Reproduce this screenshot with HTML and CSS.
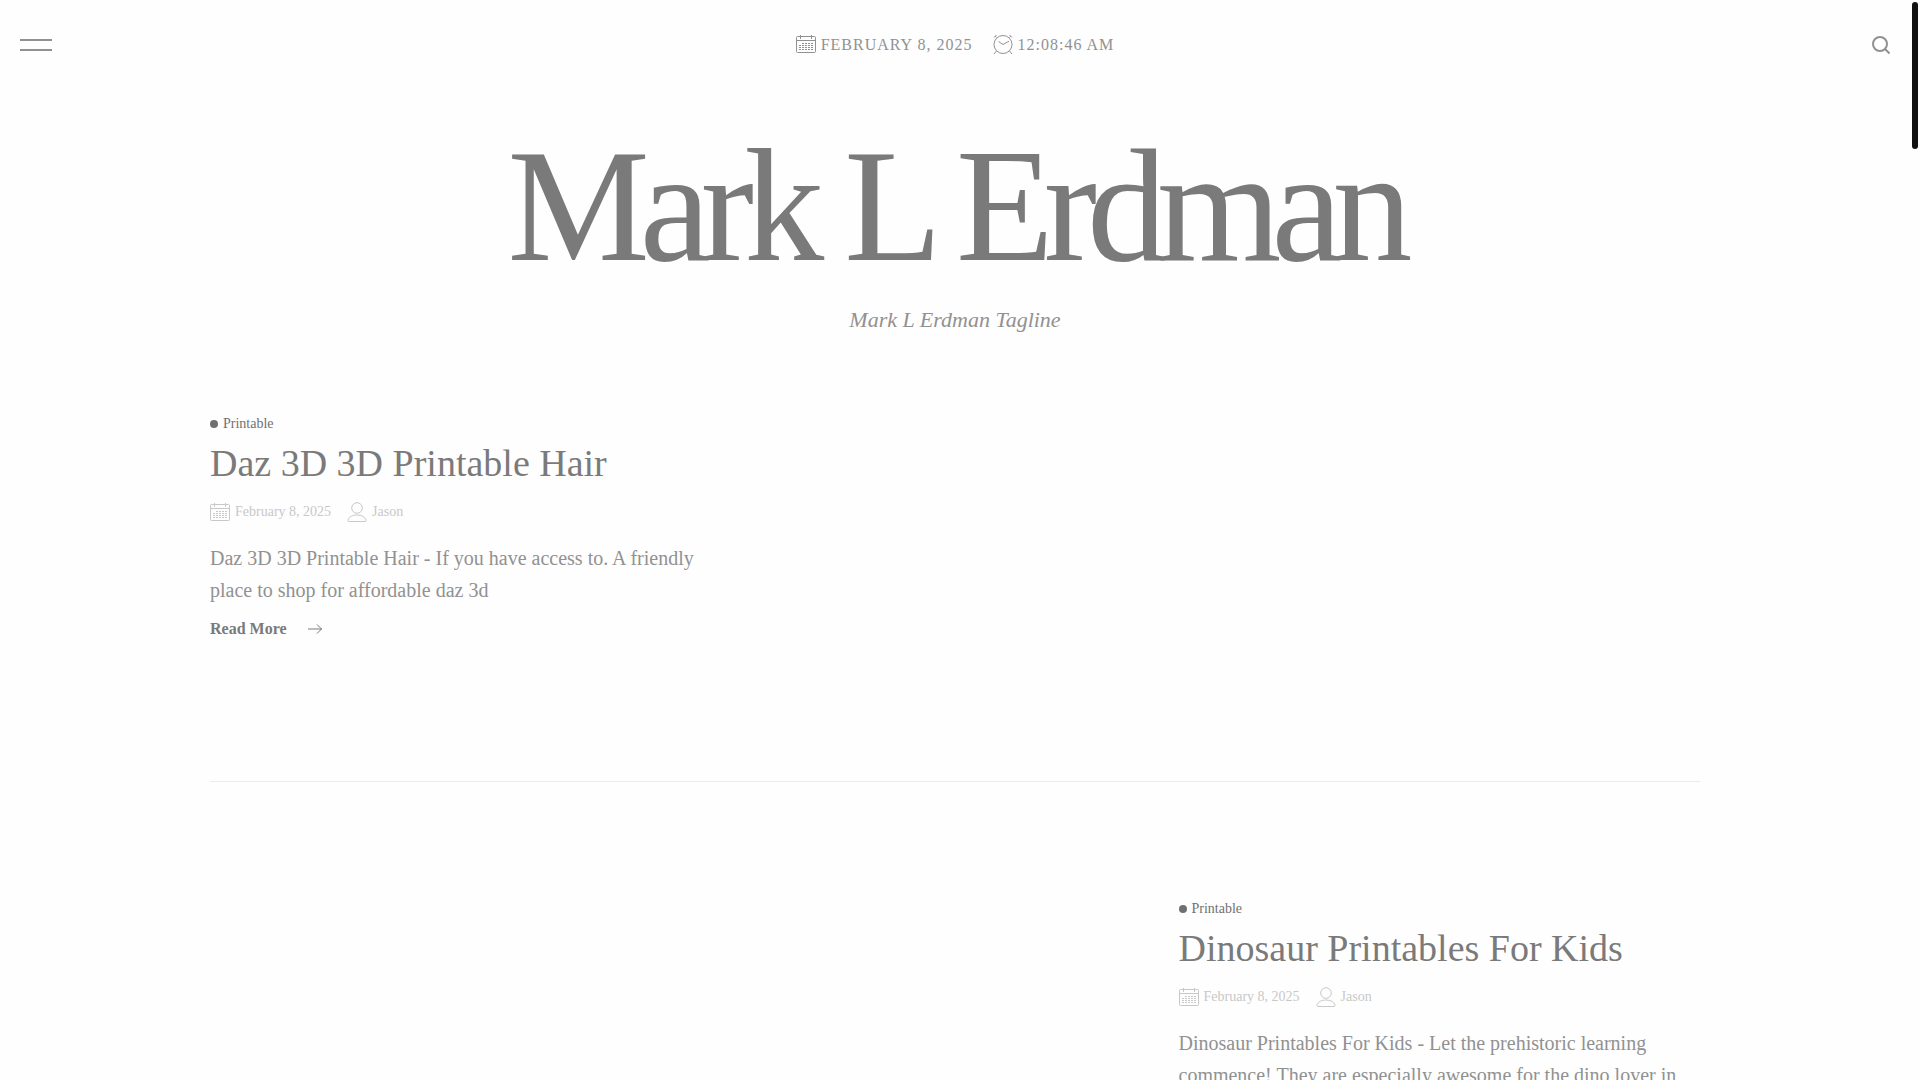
FILE: index.html
```
<!DOCTYPE html>
<html lang="en">
<head>
<meta charset="utf-8">
<title>Mark L Erdman</title>
<link rel="stylesheet" href="styles.css">
</head>

<body>
<!-- Shared icons -->
<svg class="sprite" aria-hidden="true">
    <symbol id="icon-calendar" viewBox="0 0 20 20">
        <rect x=".5" y="2.5" width="19" height="16" rx="1"/>
        <path d="M.5 6.5h19M4.5 1v4M15.5 1v4"/>
        <path stroke-dasharray="2 1" d="M6 9.5h11M3 11.5h14M3 13.5h14M3 15.5h14"/>
    </symbol>
    <symbol id="icon-clock" viewBox="0 0 20 20">
        <circle cx="10" cy="10.5" r="9"/>
        <path d="M5.5 7.5l4.5 3 6-3.3M1 3.5L3.500 1M3.5 3.5L2 2M19 3.5L16.5 1M16.5 3.5L18 2M3.5 17L1 20M16.5 17L19 20"/>
    </symbol>
    <symbol id="icon-user" viewBox="0 0 20 20">
        <circle cx="10" cy="6" r="5.3"/>
        <path d="M2 19.5h16c.9 0 1.3-.6 1-1.5-1-3.3-4.5-5-9-5s-8 1.700-9 5c-.3.9.1 1.5 1 1.5z"/>
    </symbol>
    <symbol id="icon-arrow" viewBox="0 0 16 12">
        <path d="M1 6h14M10 1.5L14.5 6 10 10.5"/>
    </symbol>
</svg>

<header class="topbar">
    <button class="menu-toggle" type="button" aria-label="Menu"><span></span><span></span></button>
    <div class="datetime">
        <span class="meta-item"><svg class="icon"><use href="#icon-calendar"/></svg>February 8, 2025</span>
        <span class="meta-item"><svg class="icon"><use href="#icon-clock"/></svg>12:08:46 AM</span>
    </div>
    <button class="search-toggle" type="button" aria-label="Search">
        <svg viewBox="0 0 20 20"><circle cx="10" cy="9" r="7"/><path d="M15 14l4.5 4.5"/></svg>
    </button>
</header>

<div class="branding">
    <h1 class="site-title"><a href="#">Mark L Erdman</a></h1>
    <p class="tagline">Mark L Erdman Tagline</p>
</div>

<main class="posts">
    <article class="post">
        <div class="post-content">
            <a class="category" href="#">Printable</a>
            <h2 class="post-title"><a href="#">Daz 3D 3D Printable Hair</a></h2>
            <div class="post-meta">
                <a class="meta-item" href="#"><svg class="icon"><use href="#icon-calendar"/></svg>February 8, 2025</a>
                <a class="meta-item" href="#"><svg class="icon"><use href="#icon-user"/></svg>Jason</a>
            </div>
            <p class="excerpt">Daz 3D 3D Printable Hair - If you have access to. A friendly place to shop for affordable daz 3d</p>
            <a class="read-more" href="#">Read More<svg><use href="#icon-arrow"/></svg></a>
        </div>
    </article>
    <article class="post post-right">
        <div class="post-content">
            <a class="category" href="#">Printable</a>
            <h2 class="post-title"><a href="#">Dinosaur Printables For Kids</a></h2>
            <div class="post-meta">
                <a class="meta-item" href="#"><svg class="icon"><use href="#icon-calendar"/></svg>February 8, 2025</a>
                <a class="meta-item" href="#"><svg class="icon"><use href="#icon-user"/></svg>Jason</a>
            </div>
            <p class="excerpt">Dinosaur Printables For Kids - Let the prehistoric learning commence! They are especially awesome for the dino lover in</p>
            <a class="read-more" href="#">Read More<svg><use href="#icon-arrow"/></svg></a>
        </div>
    </article>
</main>

<div class="scroll-thumb"></div>
</body>
</html>
```
FILE: styles.css
```
* {
    box-sizing: border-box;
}
html {
    height: 100%;
    overflow: hidden;
    background: #fefefe;
}
body {
    margin: 0 10px 0 0;
    font-family: "Liberation Serif", "Times New Roman", serif;
    color: #919191;
}
a {
    color: inherit;
    text-decoration: none;
}
button {
    padding: 0;
    border: 0;
    background: none;
    color: inherit;
    cursor: pointer;
}
svg {
    display: block;
    fill: none;
    stroke: currentColor;
}
.sprite {
    display: none;
}
.icon {
    width: 20px;
    height: 20px;
    flex: none;
}
.meta-item {
    display: flex;
    align-items: center;
    gap: 5px;
}

/* Top bar */
.topbar {
    display: grid;
    grid-template-columns: 1fr auto 1fr;
    align-items: center;
    height: 90px;
    padding: 0 20px;
}
.menu-toggle {
    display: flex;
    flex-direction: column;
    gap: 8px;
    width: 32px;
}
.menu-toggle span {
    height: 2px;
    background: #919191;
}
.datetime {
    display: flex;
    gap: 20px;
    font-size: 16px;
    line-height: 22px;
    letter-spacing: 1px;
    text-transform: uppercase;
}
.datetime .meta-item {
    align-items: flex-start;
}
.search-toggle {
    justify-self: end;
}
.search-toggle svg {
    width: 20px;
    height: 20px;
    stroke-width: 2;
}

/* Site title */
.branding {
    text-align: center;
}
.site-title {
    margin: 0;
    padding-top: 32px;
    font-size: 160px;
    font-weight: 400;
    line-height: 168px;
    letter-spacing: -10px;
    color: #7a7a7a;
}
.tagline {
    margin: 16px 0 0;
    font-size: 22px;
    font-style: italic;
    line-height: 28px;
}

/* Posts */
.posts {
    max-width: 1490px;
    margin: 0 auto;
}
.post {
    display: flex;
    padding: 115px 0 140px;
    border-bottom: 1px solid #ebebeb;
}
.post:first-child {
    padding-top: 78px;
}
.post-right {
    justify-content: flex-end;
}
.post-content {
    width: 35%;
}
.category {
    display: flex;
    align-items: center;
    gap: 5px;
    font-size: 14px;
    line-height: 24px;
    color: #707070;
}
.category::before {
    content: "";
    width: 8px;
    height: 8px;
    border-radius: 50%;
    background: #707070;
}
.post-title {
    margin: 4px 0 14px;
    font-size: 38px;
    font-weight: 400;
    line-height: 46px;
    color: #7a7a7a;
}
.post-meta {
    display: flex;
    gap: 16px;
    margin: 0 0 18px;
    font-size: 14px;
    line-height: 24px;
    color: #c8c8c8;
}
.excerpt {
    margin: 0 0 11px;
    font-size: 20px;
    line-height: 32px;
}
.read-more {
    display: inline-flex;
    align-items: center;
    gap: 20px;
    font-size: 16px;
    font-weight: 700;
    line-height: 24px;
    color: #7a7a7a;
}
.read-more svg {
    width: 16px;
    height: 12px;
}

/* Scroll indicator, floats over the page */
.scroll-thumb {
    position: fixed;
    top: 2px;
    right: 2px;
    width: 6px;
    height: 147px;
    border-radius: 3px;
    background: #111;
}
```
